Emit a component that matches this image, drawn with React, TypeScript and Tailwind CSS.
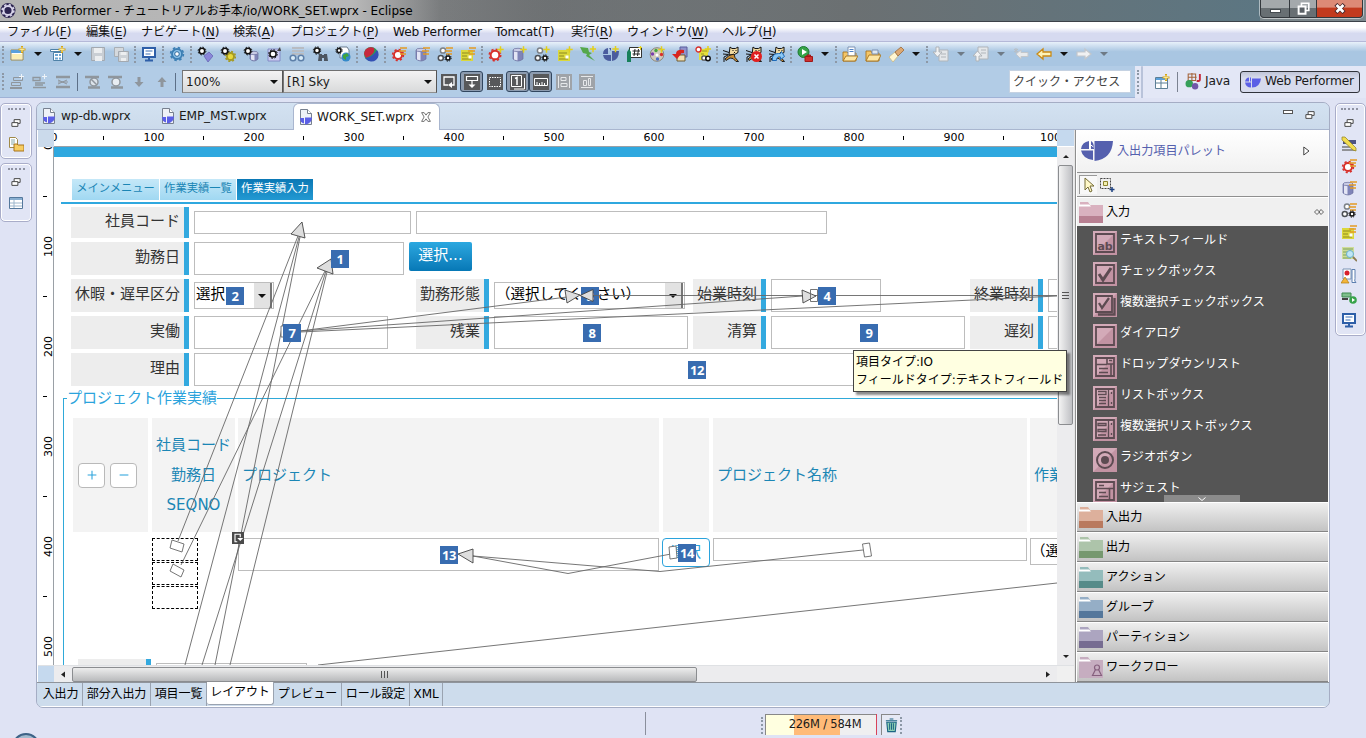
import type { ReactNode } from 'react';

/* ---------- icon primitives ---------- */

function Svg({ children, className = 'h-4 w-4' }: { children: ReactNode; className?: string }) {
  return (
    <svg viewBox="0 0 16 16" className={`shrink-0 ${className}`} fill="none">
      {children}
    </svg>
  );
}

function Gear({ x, y, r, c, fill = '#fff' }: { x: number; y: number; r: number; c: string; fill?: string }) {
  const small = r < 3.5;
  const outer = r + (small ? 0.9 : 1.4);
  const step = (Math.PI * 2 * outer) / 16;
  return (
    <g>
      <circle cx={x} cy={y} r={outer} stroke={c} strokeWidth={small ? 1 : 1.6} strokeDasharray={`${step} ${step}`} />
      <circle cx={x} cy={y} r={small ? r - 0.3 : r} stroke={c} strokeWidth={small ? 1.5 : 1.9} fill={fill} />
    </g>
  );
}

function Db({ x = 3, y = 2, w = 10, h = 13 }: { x?: number; y?: number; w?: number; h?: number }) {
  return (
    <g>
      <path d={`M${x} ${y + 2}v${h - 4}q${w / 2} 4 ${w} 0v-${h - 4}z`} fill="#7f84b8" stroke="#6a6f9c" strokeWidth=".7" />
      <path d={`M${x + 1} ${y + 2}v${h - 3.5}l3.5 1v-${h - 4}z`} fill="#e3e5f5" />
      <ellipse cx={x + w / 2} cy={y + 2} rx={w / 2} ry="1.7" fill="#c9cce6" stroke="#6a6f9c" strokeWidth=".7" />
    </g>
  );
}

const Plus = ({ x = 12.5, y = 3.5 }: { x?: number; y?: number }) => (
  <path d={`M${x} ${y - 3.2}v6.4M${x - 3.2} ${y}h6.4`} stroke="#e3cf1b" strokeWidth="1.5" />
);
const Bars = () => <path d="M9 2h7M8 5h7M9 8h6" stroke="#e39a24" strokeWidth="1.5" />;
const Note = () => (
  <g>
    <path d="M1 4h12v11H1z" fill="#dbd83c" />
    <path d="M2 7h8M2 10h5M2 13h9" stroke="#8f8a20" />
    <path d="M8.500 9.500h3v3h-3z" fill="#fff" />
  </g>
);
const Folder = () => (
  <g>
    <path d="M1 5h5l1 2h7v8H1z" fill="#f4c668" stroke="#a8741d" strokeWidth=".9" />
    <path d="M1 15l3-6h12l-3 6z" fill="#fde6a4" stroke="#a8741d" strokeWidth=".9" />
  </g>
);
const Cat = () => (
  <g>
    <path d="M7 1l2 1.500h3.500L15 1v5.500L11.500 8.500 6 9z" fill="#f0d9a0" stroke="#111" />
    <path d="M0 4.500l6 2M0 8l5.500 .5" stroke="#111" />
    <path d="M11 8l-5 1.500L2 13l1 1.500L7 12l3 .5L13 15.500h2.500L12 11.500z" fill="#c98f38" stroke="#111" strokeWidth=".9" />
    <path d="M5 9L1 11v5" stroke="#111" />
    <path d="M9.500 4.500h1M12.500 4.500h1M11 6.500h1" stroke="#111" />
  </g>
);

const ICONS: Record<string, ReactNode> = {
  newFile: (
    <>
      <path d="M1 4h12v10H1z" fill="#fff" stroke="#a08a49" />
      <path d="M1 4h12v3H1z" fill="#5aa0dc" />
      <path d="M2 8h10v5H2z" fill="#fbeeb3" />
      <path d="M12 0v7M8.5 3.5h7" stroke="#d4a416" strokeWidth="2" />
      <path d="M12 1v5M9.500 3.500h5" stroke="#fff3b0" strokeWidth=".8" />
    </>
  ),
  newType: (
    <>
      <path d="M.5 3.500h10v2H.5zM3.500 6.500h9v8h-9z" fill="#fff" stroke="#4f82a8" />
      <path d="M5 8h3v2H5zM5 11.500h3v2H5zM9 8h2v2H9zM9 11.500h2v2H9z" fill="#6da6d2" />
      <path d="M12 0v7M8.5 3.5h7" stroke="#d4a416" strokeWidth="2" />
      <path d="M12 1v5M9.500 3.500h5" stroke="#fff3b0" strokeWidth=".8" />
    </>
  ),
  save: (
    <>
      <path d="M1.500 1.500h13v13h-13z" fill="#c9ced4" stroke="#a3a9b0" />
      <path d="M4 2h8v5H4zM5 10h7v5H5z" fill="#eceef0" />
    </>
  ),
  saveAll: (
    <>
      <path d="M1.500 1.500h9v9h-9z" fill="#d5d9dd" stroke="#a9afb5" />
      <path d="M5.500 5.500h10v10h-10z" fill="#cdd2d7" stroke="#a3a9b0" />
      <path d="M7.500 6h6v3h-6zM8 12h5v3H8z" fill="#eceef0" />
    </>
  ),
  monitor: (
    <>
      <path d="M2 2h12v9H2z" fill="#fff" stroke="#2e5fa8" strokeWidth="2" />
      <path d="M4.500 5h7M4.500 8h5" stroke="#3b6fb5" />
      <path d="M4 14.500h8M8 11v3" stroke="#2e5fa8" strokeWidth="2" />
    </>
  ),
  gearBlue: (
    <>
      <Gear x={8} y={8} r={5} c="#3c7fb4" fill="#8dc3ea" />
      <circle cx="8" cy="8" r="2.300" fill="#fff" stroke="#2b6799" />
    </>
  ),
  gearTag: (
    <>
      <path d="M7 10l5-4 4 4-5 6z" fill="#8a86d8" stroke="#5550a8" strokeWidth=".6" />
      <Gear x={5} y={5} r={3} c="#111" />
    </>
  ),
  gearStar: (
    <>
      <Gear x={10.500} y={10.500} r={3.500} c="#a59a22" fill="#e8d93c" />
      <Gear x={5} y={5} r={3} c="#111" />
    </>
  ),
  gearDb: (
    <>
      <Db x={7} y={5} w={8} h={10} />
      <Gear x={5} y={5} r={3} c="#111" />
    </>
  ),
  gearDb2: (
    <>
      <path d="M2 3h12v12H2z" fill="#c9cbef" stroke="#7a7fc0" strokeWidth=".8" />
      <path d="M14 1l-3 4h4z" fill="#444" />
      <Gear x={7} y={8} r={3.400} c="#111" />
    </>
  ),
  glasses: (
    <>
      <path d="M3 2h12M3 5h12M3 8h12" stroke="#b8bcc2" strokeWidth="2" />
      <circle cx="4" cy="12" r="2.800" stroke="#5d7fa8" strokeWidth="1.500" fill="#d9ecf8" />
      <circle cx="12" cy="12" r="2.800" stroke="#5d7fa8" strokeWidth="1.500" fill="#d9ecf8" />
    </>
  ),
  binoc: (
    <>
      <path d="M7 8h3v7H6zM12 8h3l1 7h-4zM9 9h4v3H9z" fill="#4c5560" />
      <Gear x={5} y={4.500} r={2.800} c="#111" />
    </>
  ),
  gearGlobe: (
    <>
      <path d="M5 1h7l2 3v8H5z" fill="#fff" stroke="#6d7f91" />
      <circle cx="11" cy="11" r="4.500" fill="#3489c9" />
      <path d="M8 9l4-2 2 3-3 1v3l-3-2z" fill="#3fa53c" />
      <Gear x={4} y={4.500} r={2.300} c="#111" />
    </>
  ),
  globe: (
    <>
      <circle cx="8" cy="8" r="7" fill="#2b9b58" />
      <path d="M1 8a7 7 0 0 1 10-6Q13 8 3 12z" fill="#c7283d" />
      <path d="M2 12q8-1 12-8a7 7 0 0 1-11 9z" fill="#3450b4" />
    </>
  ),
  redBars: (
    <>
      <Gear x={7} y={9} r={4} c="#d8302b" />
      <Bars />
    </>
  ),
  dbBars: (
    <>
      <Db x={2} />
      <Bars />
    </>
  ),
  gearsBars: (
    <>
      <circle cx="6" cy="4.500" r="2.600" stroke="#7b8087" strokeWidth="1.500" fill="#fff" />
      <circle cx="3.800" cy="12" r="2.500" stroke="#4c5056" strokeWidth="1.500" fill="#fff" />
      <Bars />
      <Gear x={11} y={12} r={2.300} c="#111" />
    </>
  ),
  noteBars: (
    <>
      <Note />
      <Bars />
    </>
  ),
  redPlus: (
    <>
      <Gear x={7} y={9} r={4.300} c="#d8302b" />
      <Plus />
    </>
  ),
  dbPlus: (
    <>
      <Db x={2} />
      <Plus />
    </>
  ),
  gearsPlus: (
    <>
      <circle cx="6" cy="4.500" r="2.600" stroke="#7b8087" strokeWidth="1.500" fill="#fff" />
      <circle cx="3.800" cy="12" r="2.500" stroke="#4c5056" strokeWidth="1.500" fill="#fff" />
      <Plus />
      <Gear x={11} y={12} r={2.300} c="#111" />
    </>
  ),
  notePlus: (
    <>
      <Note />
      <Plus />
    </>
  ),
  bolt: (
    <>
      <path d="M0 1l8 1 1 4 3 1-3 2 6 6-9-5 1-2-4-1z" fill="#55a84c" />
      <Plus x={13} y={3} />
    </>
  ),
  wpPlus: (
    <>
      <path d="M0 9h8v6q-7 0-8-6zM0 8q0-5 5-6v6zM6 2l2 0v3zM9 5h7q0 9-7 10z" fill="#4a5c9e" />
      <Plus x={12.500} y={3} />
    </>
  ),
  hash: (
    <>
      <path d="M3.500 1.500h12v10h-12z" fill="#fff" stroke="#333" />
      <path d="M9 3l-1 7M12.500 3l-1 7M6.500 5h7.500M6.500 8h7.500" stroke="#111" strokeWidth=".9" />
      <path d="M1 6l2-3 2 3v10H1z" fill="#17805a" />
      <path d="M12.500 1.500h3.500M14.500 0v4" stroke="#e3cf1b" />
    </>
  ),
  palette: (
    <>
      <circle cx="8" cy="8.500" r="6.800" fill="#cfc9bd" stroke="#8b8579" />
      <circle cx="7" cy="4.500" r="1.700" fill="#46a83c" />
      <circle cx="3.500" cy="8" r="1.700" fill="#7a3fb0" />
      <circle cx="12.500" cy="8.500" r="1.700" fill="#d8302b" />
      <circle cx="8" cy="9" r="1.500" fill="#fff" />
      <circle cx="8.500" cy="13" r="1.700" fill="#4a6fc9" />
      <Plus x={12.500} y={3.500} />
    </>
  ),
  redDb: (
    <>
      <path d="M8 1h7v10H8z" fill="#8f93cc" stroke="#5a5f9c" />
      <path d="M5 9h8v6H5z" fill="#f3dfb0" stroke="#6e5a33" />
      <path d="M12 4Q4 3 4 8H0l5 5 4-5Q8 7 12 7z" fill="#d8251f" />
    </>
  ),
  gearNote: (
    <>
      <path d="M4 3h9v11H4z" fill="#e5df3c" />
      <path d="M7 5h5M6 8h3" stroke="#9a9420" />
      <circle cx="3.500" cy="3.500" r="2.500" stroke="#d8302b" strokeWidth="1.400" fill="#fff" />
      <circle cx="9" cy="12" r="2.200" stroke="#555" strokeWidth="1.300" fill="#fff" />
      <circle cx="13" cy="12.500" r="2.200" stroke="#111" strokeWidth="1.500" fill="#fff" />
      <Plus x={13} y={3} />
    </>
  ),
  cat: <Cat />,
  catX: (
    <>
      <Cat />
      <circle cx="10.500" cy="10.500" r="5.500" fill="#e02020" />
      <path d="M8.500 8.500l4 4M12.500 8.500l-4 4" stroke="#fff" strokeWidth="1.500" />
    </>
  ),
  catR: (
    <>
      <Cat />
      <path d="M3.500 14.500q-1-7 6-7h2l1-2 3 5-4 3v-2.500q-4-1-4 3.500z" fill="#8cc8f4" stroke="#1d6ab8" />
    </>
  ),
  run: (
    <>
      <circle cx="6.500" cy="6" r="5.500" fill="#36a348" stroke="#1d7a31" />
      <path d="M5 3l5 3-5 3z" fill="#fff" />
      <path d="M8 10.500h7.500v5H8zM10 10.500V9h3.500v1.500" fill="#cf2f2f" stroke="#a01818" />
    </>
  ),
  folderDoc: (
    <>
      <path d="M1 6h4l1 1h8v8H1z" fill="#f4c668" stroke="#a8741d" strokeWidth=".9" />
      <path d="M6 1h7v9H6z" fill="#fff" stroke="#7d93b4" />
      <path d="M7.500 3.500h4M7.500 5.500h4" stroke="#4f82c8" />
      <path d="M1 15l3-5h12l-3 5z" fill="#fde6a4" stroke="#a8741d" strokeWidth=".9" />
    </>
  ),
  folder: (
    <>
      <Folder />
      <path d="M7 4h6v4H7z" fill="#dfe8f2" stroke="#7d93b4" />
    </>
  ),
  torch: (
    <>
      <path d="M1 11l6-5 3 4-5 6z" fill="#fff6d2" stroke="#c9b47a" strokeWidth=".7" />
      <path d="M7 6l6-5 3 3-6 6z" fill="#dca872" stroke="#9b6a3a" strokeWidth=".8" />
    </>
  ),
  docDown: (
    <>
      <path d="M6 4h9v11H6z" fill="#e4e7ea" stroke="#b0b5ba" />
      <path d="M8 8h5M8 11h5" stroke="#b0b5ba" />
      <path d="M3 1h3v5h3L4.500 11 0 6h3z" fill="#f0f1f2" stroke="#aeb3b8" />
    </>
  ),
  docUp: (
    <>
      <path d="M5 1h10v12H5z" fill="#e4e7ea" stroke="#b0b5ba" />
      <path d="M8 4h5M8 7h5" stroke="#b0b5ba" />
      <path d="M3 15h3v-5h3L4.500 5 0 10h3z" fill="#f0f1f2" stroke="#aeb3b8" />
    </>
  ),
  backStar: (
    <>
      <path d="M3 8l5-4v2.500h7v4H8V13z" fill="#e8eaec" stroke="#c3c7cb" />
      <path d="M3 2v5M1 3l4 3M5 3L1 6" stroke="#b9bdc1" />
    </>
  ),
  back: <path d="M1 8l6-5v3h8v4H7v3z" fill="#fdf3b8" stroke="#c98a16" strokeWidth="1.300" />,
  forward: <path d="M15 8L9 3v3H1v4h8v3z" fill="#f0f1f2" stroke="#c3c7cb" strokeWidth="1.200" />,
  alignA: (
    <>
      <path d="M4.500 3.500h9v3h-9zM2.500 8.500h9v3h-9z" stroke="#8f969d" />
      <path d="M1 14h12" stroke="#8f969d" strokeWidth="2" />
      <path d="M12.500 0v5M10 2.500h5" stroke="#eef3f8" />
    </>
  ),
  alignB: (
    <>
      <path d="M1 3.500h7v3H1zM3 9h10" stroke="#8f969d" strokeWidth="1.300" />
      <path d="M1 13.500h13M3 11h8" stroke="#8f969d" strokeWidth="1.500" />
      <path d="M12.500 0v5M10 2.500h5" stroke="#eef3f8" />
    </>
  ),
  alignC: (
    <>
      <path d="M1 3h14M1 13h14" stroke="#8f969d" strokeWidth="2.500" />
      <path d="M3 6l9 4M3 10l9-4M3 8h10" stroke="#8f969d" />
    </>
  ),
  skipA: (
    <>
      <path d="M0 3h14M3 13.500h12" stroke="#8f969d" strokeWidth="2.500" />
      <circle cx="9" cy="8" r="4" fill="#dce3ea" stroke="#8f969d" strokeWidth="1.500" />
      <path d="M6 5l6 6" stroke="#8f969d" strokeWidth="1.500" />
    </>
  ),
  skipB: (
    <>
      <path d="M0 3h14M3 13.500h12" stroke="#8f969d" strokeWidth="2.500" />
      <circle cx="8" cy="8" r="4" fill="#e8edf2" stroke="#8f969d" strokeWidth="1.500" />
    </>
  ),
  down: <path d="M6.500 3h3v5h3L8 13 3.500 8h3z" fill="#8f969d" />,
  up: <path d="M6.500 13h3V8h3L8 3 3.500 8h3z" fill="#8f969d" />,
  wrap: (
    <>
      <path d="M0 0h16v16H0z" fill="#57585a" />
      <path d="M7 11H3V3h10v8h-2" stroke="#fff" strokeWidth="1.300" />
      <path d="M7 11l4-3v6z" fill="#fff" />
    </>
  ),
  dropBox: (
    <>
      <path d="M0 0h16v16H0z" fill="#57585a" />
      <path d="M2.500 2.500h11v4h-11zM8 6.500V12" stroke="#fff" strokeWidth="1.200" />
      <path d="M4.500 10.500h7L8 14z" fill="#fff" />
    </>
  ),
  dashed: (
    <>
      <path d="M0 0h16v16H0z" fill="#57585a" />
      <path d="M2.500 3.500h11v9h-11z" stroke="#fff" strokeDasharray="1.500 1" />
    </>
  ),
  one: (
    <>
      <path d="M0 0h16v16H0z" fill="#57585a" />
      <path d="M1.500 1.500h10v11h-10zM14.500 4v11H4" stroke="#fff" />
      <path d="M5 4.500l2-1V11" stroke="#fff" strokeWidth="1.500" />
    </>
  ),
  ruler: (
    <>
      <path d="M0 0h16v16H0z" fill="#57585a" />
      <path d="M1.500 4.500h13v7h-13zM4 8v3M6.500 9v2M9 8v3M11.500 9v2" stroke="#fff" />
    </>
  ),
  disA: (
    <>
      <path d="M0 0h16v16H0z" fill="#9fa3a8" />
      <path d="M2.500 2v12M13.500 2v12M5 3.500h5v3H5zM5 9.500h6v3H5z" stroke="#e6e8ea" />
    </>
  ),
  disB: (
    <>
      <path d="M0 0h16v16H0z" fill="#9fa3a8" />
      <path d="M2 2.500h12M2 13.500h12M4.500 6.500h3v5h-3zM9.500 4.500h2v7h-2z" stroke="#e6e8ea" />
    </>
  ),
  persp: (
    <>
      <path d="M1.500 3.500h12v11h-12zM2 9h11M7 6v8" fill="#fff" stroke="#5d7f95" />
      <path d="M2 4h11v2H2z" fill="#5aa0dc" />
      <path d="M12 0v7M8.500 3.500h7" stroke="#d4a416" strokeWidth="2" />
      <path d="M12 1v5M9.500 3.500h5" stroke="#fff3b0" strokeWidth=".8" />
    </>
  ),
  java: (
    <>
      <path d="M3 1h7v6H3zM6.500 0v7M3 4h8" stroke="#a4643a" />
      <circle cx="4" cy="10" r="3.500" fill="#36a05a" />
      <circle cx="9.500" cy="12.500" r="3" fill="#7257a8" />
      <path d="M14 1v5q0 2-3 1.500" stroke="#c32b3c" strokeWidth="1.800" />
    </>
  ),
  wp: (
    <>
      <path d="M0 8.500h6v5q-5 0-6-5zM0 7.500q1-4 4-4v4zM5 3.500h1v4H5z" fill="#5b5fe6" />
      <path d="M7 4.500h9q-1 9-9 9z" fill="#5b5fe6" />
    </>
  ),
  wprx: (
    <>
      <path d="M2.500 .5h7l4 4v11h-11z" fill="#eef1f7" stroke="#77808f" />
      <path d="M9.500 .5v4h4" fill="#fff" stroke="#77808f" />
      <path d="M2 9h4v5.500q-4-1-4-5.500zM7 8.500h7q0 6-7 7z" fill="#5b5fe6" />
    </>
  ),
  restore: (
    <>
      <path d="M5.500 3.500h8v5h-8z" fill="#fff" stroke="#444" strokeWidth="1.300" />
      <path d="M2.500 7.500h8v5h-8z" fill="#fff" stroke="#444" strokeWidth="1.300" />
    </>
  ),
  copyFolder: (
    <>
      <path d="M1.500 1.500h6l2 2v8h-8z" fill="#fff" stroke="#a08a49" />
      <path d="M3 4h4M3 6h4M3 8h3" stroke="#8aa" />
      <path d="M6 8h3l1 1h6v6H6z" fill="#f7cd62" stroke="#a8741d" />
    </>
  ),
  table: (
    <>
      <path d="M1.500 2.500h13v11h-13z" fill="#fff" stroke="#54789c" />
      <path d="M2 3h12v2H2z" fill="#88aed0" />
      <path d="M6 5v8M2 8h12M2 11h12" stroke="#9cb6cc" />
    </>
  ),
  pencil: (
    <>
      <path d="M2 4h13v4H2z" fill="#4c5383" />
      <path d="M1 14h14M1 11h8" stroke="#777" strokeWidth="1.500" />
      <path d="M1 1l3 0 11 11 0 3-3-1L1 4z" fill="#f1dc50" stroke="#8f7f20" strokeWidth=".7" />
    </>
  ),
  search: (
    <>
      <path d="M1 1h12v12H1z" fill="#cfdc9a" />
      <path d="M2 3h10M2 6h8M2 9h8M2 12h8" stroke="#7ba35c" />
      <circle cx="9" cy="8" r="3.500" fill="#bfe6f7" stroke="#6ab0cc" />
      <path d="M12 11l4 4" stroke="#8c7a52" strokeWidth="1.800" />
    </>
  ),
  problem: (
    <>
      <path d="M2 1h8v10H2z" fill="#fff" stroke="#7b93b4" />
      <circle cx="6" cy="5" r="2.500" fill="#d9202a" />
      <path d="M11 1.500h3v9q-1 3 1 4h-4z" fill="#fff" stroke="#5c7faf" />
      <path d="M4 9l4 6H0z" fill="#f4b63a" stroke="#b27b10" strokeWidth=".7" />
    </>
  ),
  server: (
    <>
      <path d="M1 3h9v4H1z" fill="#7fc08d" stroke="#3f8a51" />
      <path d="M1 9h6" stroke="#444" strokeWidth="2" />
      <circle cx="12" cy="10" r="3.800" fill="#37a34a" />
      <path d="M11 8l3 2-3 2z" fill="#fff" />
    </>
  ),
  trash: (
    <>
      <path d="M3 5h10l-1 10H4z" fill="#8fd0b4" stroke="#1b6584" strokeWidth="1.200" />
      <path d="M2 3.500h12M6 1.500h4M6 6v7M8 6v7M10 6v7" stroke="#1b6584" strokeWidth="1.100" />
    </>
  ),
};

const Icon = ({ n, className }: { n: string; className?: string }) => <Svg className={className}>{ICONS[n]}</Svg>;

const Caret = ({ dim = false }: { dim?: boolean }) => (
  <svg viewBox="0 0 8 4" className="h-1 w-2">
    <path d="M0 0h8L4 4z" fill={dim ? '#6e7a86' : '#111'} />
  </svg>
);

/* ---------- window chrome ---------- */

function TitleBar() {
  return (
    <div className="flex h-[22px] items-start border-b border-[#3c4148] bg-linear-to-r from-[#a9a9a9] via-[#6f7274] via-40% to-[#7d898e]">
      <div className="flex h-[21px] w-[440px] items-center gap-1.5 bg-linear-to-r from-[#b4b4b4] via-[#b8b8b8] via-80% to-transparent">
        <Svg className="h-[17px] w-4">
          <circle cx="8" cy="8" r="7.500" fill="#2c2450" />
          <Gear x={8} y={8} r={4.500} c="#d8d4ea" fill="#2c2450" />
        </Svg>
        <span className="text-[12px] tracking-[-0.02px] whitespace-nowrap text-black">Web Performer - チュートリアルお手本/io/WORK_SET.wprx - Eclipse</span>
      </div>
      <div className="h-[21px] flex-1 bg-linear-to-r from-transparent via-[#6b7072] via-50% to-[#5c7682]" />
      <div className="mr-[3px] flex h-[18px] w-[103px] overflow-hidden rounded-b-[4px] border border-t-0 border-[#33383d] bg-[#33383d] ring-1 ring-white/50">
        <div className="flex w-[28px] items-center justify-center bg-linear-to-b from-[#a4a9ac] from-45% to-[#686f73] to-50%">
          <span className="mt-1 h-[4px] w-[11px] border border-[#454b50] bg-white" />
        </div>
        <div className="ml-px flex w-[26px] items-center justify-center bg-linear-to-b from-[#a4a9ac] from-45% to-[#686f73] to-50%">
          <Svg className="h-[13px] w-[13px]">
            <path d="M5.500 1.500h9v9h-9z" stroke="#fff" strokeWidth="2" />
            <path d="M2 5.500h8.500v9H2z" fill="#5b6166" stroke="#fff" strokeWidth="2.400" />
          </Svg>
        </div>
        <div className="ml-px flex flex-1 items-center justify-center bg-linear-to-b from-[#dd8a76] from-40% to-[#c23a1e] to-50%">
          <Svg className="h-[11px] w-[12px]">
            <path d="M2 2l12 12M14 2L2 14" stroke="#47262a" strokeWidth="6" />
            <path d="M3 3l10 10M13 3L3 13" stroke="#fff" strokeWidth="4" />
          </Svg>
        </div>
      </div>
    </div>
  );
}

function MenuItem({ t, k, w }: { t: string; k: string; w: string }) {
  return (
    <span className={`shrink-0 whitespace-nowrap ${w}`}>
      {t}(<span className="underline underline-offset-2">{k}</span>)
    </span>
  );
}

function MenuBar() {
  return (
    <div className="flex h-5 items-center border-b border-[#b5b9d8] bg-linear-to-b from-white from-30% to-[#d6daf0] to-60% pl-[7px] text-[12.2px] leading-5 tracking-[-0.15px] text-[#111]">
      <MenuItem t="ファイル" k="F" w="w-[79px]" />
      <MenuItem t="編集" k="E" w="w-[55px]" />
      <MenuItem t="ナビゲート" k="N" w="w-[92px]" />
      <MenuItem t="検索" k="A" w="w-[57px]" />
      <MenuItem t="プロジェクト" k="P" w="w-[103px]" />
      <span className="w-[102px] shrink-0">Web Performer</span>
      <span className="w-[76px] shrink-0">Tomcat(T)</span>
      <MenuItem t="実行" k="R" w="w-[56px]" />
      <MenuItem t="ウィンドウ" k="W" w="w-[95px]" />
      <MenuItem t="ヘルプ" k="H" w="w-[70px]" />
    </div>
  );
}

const Dots = () => <span className="h-[17px] border-l-2 border-dotted border-[#8d98a6]" />;

const MAIN_TOOLS =
  'newFile v newType v save saveAll | monitor | gearBlue | gearTag gearStar gearDb gearDb2 glasses binoc gearGlobe | globe | redBars dbBars gearsBars noteBars | redPlus dbPlus gearsPlus notePlus bolt wpPlus hash palette redDb gearNote | cat catX catR | run v | folderDoc folder torch v | docDown d docUp d backStar back v forward d'.split(
    ' ',
  );

function MainTools() {
  return (
    <div className="flex h-6 items-center bg-linear-to-b from-[#e8f1fa] to-[#a9c6e2] to-40% pl-[2px]">
      <span className="flex w-[4px]">
        <Dots />
      </span>
      {MAIN_TOOLS.map((t, i) =>
        t === '|' ? (
          <span key={i} className="flex w-[5px] shrink-0 justify-center">
            <Dots />
          </span>
        ) : t === 'v' || t === 'd' ? (
          <span key={i} className="flex w-[17px] shrink-0 justify-center">
            <Caret dim={t === 'd'} />
          </span>
        ) : (
          <span key={i} className="flex w-[23px] shrink-0 justify-center">
            <Icon n={t} />
          </span>
        ),
      )}
    </div>
  );
}

function Combo({ text, w }: { text: string; w: string }) {
  return (
    <div className={`flex h-[23px] shrink-0 items-center justify-between border border-t-[#707070] border-r-[#555] border-b-[#8f8f8f] border-l-[#777] bg-linear-to-b from-[#f3f3f3] to-[#d9dadb] pr-1 pl-[3px] text-[12px] ${w}`}>
      {text}
      <Caret />
    </div>
  );
}

function LayoutTools() {
  const cell = 'flex h-5 w-[23px] shrink-0 items-center justify-center';
  const pressed = 'flex h-[21px] w-[23px] shrink-0 items-center justify-center rounded-[3px] border border-[#31465f] bg-[#8d9cb0]';
  return (
    <div className="flex h-8 items-center border-b border-[#9fb2d6] bg-[#b2cce6] pl-[2px]">
      <span className="flex w-[3px]">
        <Dots />
      </span>
      {['alignA', 'alignB', 'alignC'].map((n) => (
        <span key={n} className={cell}>
          <Icon n={n} />
        </span>
      ))}
      <span className="mx-[3px] h-[18px] w-px bg-[#5d7088]" />
      {['skipA', 'skipB', 'down', 'up'].map((n) => (
        <span key={n} className={cell}>
          <Icon n={n} />
        </span>
      ))}
      <span className="mr-[6px] ml-[2px] h-[18px] w-px bg-[#5d7088]" />
      <Combo text="100%" w="w-[101px]" />
      <Combo text="[R] Sky" w="w-[154px]" />
      <span className={cell}>
        <Icon n="wrap" />
      </span>
      <span className={pressed}>
        <Icon n="dropBox" />
      </span>
      <span className={cell}>
        <Icon n="dashed" />
      </span>
      <span className={pressed}>
        <Icon n="one" />
      </span>
      <span className={pressed}>
        <Icon n="ruler" />
      </span>
      <span className={cell}>
        <Icon n="disA" />
      </span>
      <span className={cell}>
        <Icon n="disB" />
      </span>
      <div className="flex-1" />
      <div className="flex h-[23px] w-[122px] items-center border border-[#c5d2e2] bg-white pl-[3px] text-[12px] text-[#444]">クイック・アクセス</div>
      <div className="ml-1 flex h-8 w-[231px] shrink-0 items-center bg-[#e3e7f6]">
        <span className="ml-[2px] h-6 border-l-2 border-dotted border-[#8d98a6]" />
        <span className="ml-[2px] h-8 w-[2px] rounded-t bg-[#b9c3da]" />
        <Icon n="persp" className="ml-[11px] h-4 w-4" />
        <span className="mr-[7px] ml-[7px] h-5 w-px bg-[#7b8291]" />
        <Icon n="java" className="h-[17px] w-[17px]" />
        <span className="ml-[3px] w-[31px] text-[12.2px] tracking-[-0.15px]">Java</span>
        <span className="ml-[4px] flex h-[22px] w-[120px] shrink-0 items-center gap-1 rounded-[3px] border border-[#30333a] bg-linear-to-b from-[#bfc4d6] to-[#d7dbec] to-30% pl-1 text-[12.2px] tracking-[-0.15px] whitespace-nowrap">
          <Icon n="wp" className="h-4 w-4" />
          Web Performer
        </span>
      </div>
    </div>
  );
}

function Grip() {
  return <span className="mx-auto block h-[3px] w-[17px] border-t-2 border-dotted border-[#8f93a2]" />;
}

function LeftTrim() {
  const box = 'flex w-8 flex-col items-center rounded-[5px] border border-[#a9adc9] bg-[#e1e5f5] pt-[4px] ring-1 ring-white ring-inset';
  return (
    <div className="flex w-9 flex-col gap-1 pt-[2px]">
      <div className={`h-[56px] ${box}`}>
        <Grip />
        <Icon n="restore" className="mt-[6px] h-3 w-3" />
        <Icon n="copyFolder" className="mt-[7px] h-4 w-4" />
      </div>
      <div className={`h-[59px] ${box}`}>
        <Grip />
        <Icon n="restore" className="mt-[5px] h-3 w-3" />
        <Icon n="table" className="mt-[7px] h-4 w-4" />
      </div>
    </div>
  );
}

function RightTrim() {
  return (
    <div className="mt-[2px] ml-[5px] flex h-[233px] w-[31px] flex-col items-center self-start rounded-[5px] border border-[#a9adc9] bg-[#e1e5f5] pt-[4px] pr-[3px] ring-1 ring-white ring-inset">
      <Grip />
      <Icon n="restore" className="mt-[6px] h-3 w-3" />
      <div className="mt-[7px] flex flex-col gap-[6px]">
        {['pencil', 'redBars', 'dbBars', 'gearsBars', 'noteBars', 'search', 'problem', 'server', 'monitor'].map((n) => (
          <Icon key={n} n={n} className="h-4 w-4" />
        ))}
      </div>
    </div>
  );
}

/* ---------- editor tabs and rulers ---------- */

function EditorTabs() {
  return (
    <div className="flex h-[27px] shrink-0 items-stretch border-b border-[#a9b6cf] bg-linear-to-b from-[#d3e2f1] to-[#cbdaeb] text-[12.2px] tracking-[-0.15px]">
      <div className="flex w-[118px] items-center gap-[4px] pl-[4px]">
        <Icon n="wprx" />
        wp-db.wprx
      </div>
      <div className="flex w-[138px] items-center gap-[3px] pl-[5px]">
        <Icon n="wprx" />
        EMP_MST.wprx
      </div>
      <div className="-mb-px flex w-[147px] items-center gap-[3px] rounded-t-[6px] border border-b-0 border-[#a9b6cf] bg-white pl-[4px]">
        <Icon n="wprx" />
        WORK_SET.wprx
        <Svg className="ml-[4px] h-[10px] w-[10px]">
          <path d="M1 1h4l3 4 3-4h4l-4 7 4 7h-4l-3-4-3 4H1l4-7z" stroke="#555" strokeWidth="1.300" />
        </Svg>
      </div>
      <div className="flex-1" />
      <div className="flex items-start pt-[6px] pr-[13px]">
        <span className="mt-[1px] h-[4px] w-[10px] border border-[#555] bg-white" />
        <Icon n="restore" className="ml-[11px] h-3 w-3" />
      </div>
    </div>
  );
}

function HRuler() {
  return (
    <div className="flex h-[17px]">
      <div className="h-[17px] w-[16px] shrink-0 bg-[#cbdaeb]" />
      <div className="flex h-[17px] w-[1003px] overflow-hidden border-b border-[#9aa0a6] bg-white text-[11px] text-black">
        <div className="-ml-[50px] flex">
          {[0, 100, 200, 300, 400, 500, 600, 700, 800, 900, 1000].map((n) => (
            <div key={n} className="flex h-[15px] w-[100px] shrink-0 items-center">
              <span className="flex-1 pl-px text-center leading-[15px]">{n}</span>
              <span className="h-1 w-px bg-black" />
            </div>
          ))}
        </div>
      </div>
      <div className="h-[16px] flex-1 bg-[#c5d9ee]" />
    </div>
  );
}

function VRuler() {
  return (
    <div className="h-[518px] w-[16px] shrink-0 overflow-hidden border-r border-[#9aa0a6] bg-white text-[11px] text-black">
      <div className="-mt-[50px] flex flex-col">
        {[0, 100, 200, 300, 400, 500].map((n) => (
          <div key={n} className="flex h-[100px] w-[15px] shrink-0 flex-col">
            <span className="ml-[6px] flex flex-1 rotate-180 items-center justify-center leading-[11px] [writing-mode:vertical-rl]">{n}</span>
            <span className="ml-[5px] h-px w-1 bg-black" />
          </div>
        ))}
      </div>
    </div>
  );
}

/* ---------- designed form ---------- */

function Label({ children, w }: { children: ReactNode; w: string }) {
  return (
    <div className={`flex h-full shrink-0 items-center justify-end border-r-[5px] border-[#33a9df] bg-[#ededed] pr-1 pb-[3px] text-[15px] whitespace-nowrap text-[#333] ${w}`}>
      {children}
    </div>
  );
}

const Field = ({ w, h = 'h-full' }: { w: string; h?: string }) => <div className={`shrink-0 border border-[#bdbdbd] bg-white ${w} ${h}`} />;

function Select({ text, w }: { text: string; w: string }) {
  return (
    <div className={`flex h-[27px] shrink-0 items-stretch overflow-hidden border border-[#bdbdbd] bg-white text-[14.5px] whitespace-nowrap text-black ${w}`}>
      <span className="flex flex-1 items-center pb-[2px] pl-px">{text}</span>
      <span className="mr-[1px] flex w-[18px] shrink-0 items-center justify-center border-r-2 border-[#777] bg-[#e2e2e2]">
        <Caret />
      </span>
    </div>
  );
}

function Badge({ n, at }: { n: number; at: string }) {
  return (
    <span className={`absolute flex h-[18px] w-[18px] items-center justify-center bg-[#386cb0] font-['Noto_Sans',sans-serif] text-[13px] leading-none font-bold tracking-[-0.4px] text-white ${at}`}>
      {n}
    </span>
  );
}

function FormRows() {
  return (
    <div className="flex flex-col gap-1 pt-[3px] pl-[17px]">
      <div className="flex h-[31px] items-center">
        <Label w="w-[118px]">社員コード</Label>
        <div className="ml-[5px] flex gap-[5px]">
          <Field w="w-[217px]" h="h-[23px]" />
          <Field w="w-[411px]" h="h-[23px]" />
        </div>
      </div>
      <div className="flex h-[33px] items-start">
        <Label w="w-[118px]">勤務日</Label>
        <div className="ml-[5px] flex h-full gap-[5px]">
          <Field w="w-[210px]" />
          <div className="flex h-[29px] w-[63px] items-center justify-center rounded-[2px] bg-linear-to-b from-[#2ba8e0] to-[#0678b6] pb-[2px] text-[15px] text-white">選択...</div>
        </div>
      </div>
      <div className="flex h-[33px] items-center">
        <Label w="w-[118px]">休暇・遅早区分</Label>
        <div className="ml-[5px] w-[222px] shrink-0">
          <Select text="選択" w="w-[80px]" />
        </div>
        <Label w="w-[73px]">勤務形態</Label>
        <div className="ml-[5px] w-[199px] shrink-0">
          <Select text="（選択してください）" w="w-[191px]" />
        </div>
        <Label w="w-[73px]">始業時刻</Label>
        <div className="ml-[5px] h-full w-[199px] shrink-0">
          <Field w="w-[110px]" />
        </div>
        <Label w="w-[73px]">終業時刻</Label>
        <div className="ml-[5px] h-full">
          <Field w="w-[110px]" />
        </div>
      </div>
      <div className="flex h-[33px] items-center">
        <Label w="w-[118px]">実働</Label>
        <div className="ml-[5px] h-full w-[222px] shrink-0">
          <Field w="w-[194px]" />
        </div>
        <Label w="w-[73px]">残業</Label>
        <div className="ml-[5px] h-full w-[199px] shrink-0">
          <Field w="w-[194px]" />
        </div>
        <Label w="w-[73px]">清算</Label>
        <div className="ml-[5px] h-full w-[199px] shrink-0">
          <Field w="w-[194px]" />
        </div>
        <Label w="w-[73px]">遅刻</Label>
        <div className="ml-[5px] h-full">
          <Field w="w-[194px]" />
        </div>
      </div>
      <div className="flex h-[33px] items-center">
        <Label w="w-[118px]">理由</Label>
        <div className="ml-[5px] h-full">
          <Field w="w-[900px]" />
        </div>
      </div>
    </div>
  );
}

function ProjectGroup() {
  const th = 'flex h-[114px] shrink-0 items-center bg-[#f3f3f3] text-[15px] whitespace-nowrap text-[#1b86b5]';
  const sq = 'flex h-[25px] w-[27px] items-center justify-center rounded-[4px] border border-[#b9b9b9] bg-white';
  const hidden = 'h-[23px] w-[46px] border border-dashed border-black';
  return (
    <div className="ml-[9px] h-[300px] w-[1100px]">
      <div className="flex h-[24px] items-center">
        <span className="mt-[12px] h-[12px] w-[4px] border-t border-l border-[#2fa9d9]" />
        <span className="text-[15px] leading-6 whitespace-nowrap text-[#2ba3dc]">プロジェクト作業実績</span>
        <span className="h-px flex-1 bg-[#2fa9d9]" />
      </div>
      <div className="h-[276px] border-l border-[#2fa9d9] pt-[8px] pl-[9px]">
        <div className="flex">
          <div className={`w-[75px] gap-[5px] pl-[5px] ${th}`}>
            <span className={sq}>
              <Svg className="h-[14px] w-[14px]">
                <path d="M8 3v10M3 8h10" stroke="#2ba3dc" strokeWidth="1.200" />
              </Svg>
            </span>
            <span className={sq}>
              <Svg className="h-[14px] w-[14px]">
                <path d="M3 8h10" stroke="#2ba3dc" strokeWidth="1.200" />
              </Svg>
            </span>
          </div>
          <div className={`ml-1 w-[83px] flex-col justify-center leading-[30px] ${th}`}>
            <span>社員コード</span>
            <span>勤務日</span>
            <span>SEQNO</span>
          </div>
          <div className={`ml-[3px] w-[421px] pl-1 ${th}`}>プロジェクト</div>
          <div className={`ml-1 w-[46px] ${th}`} />
          <div className={`ml-1 w-[314px] pl-1 ${th}`}>プロジェクト名称</div>
          <div className={`ml-[3px] w-[100px] pl-[4px] ${th}`}>作業</div>
        </div>
        <div className="flex pt-[6px] pl-[79px]">
          <div className="flex flex-col gap-px">
            <span className={hidden} />
            <span className={hidden} />
            <span className={hidden} />
          </div>
          <div className="ml-[40px] flex items-start">
            <Field w="w-[421px]" h="h-[33px]" />
            <div className="ml-[3px] flex h-[29px] w-[48px] items-center justify-center rounded-[4px] border border-[#2ba3dc] bg-white text-[15px] text-[#2ba3dc]">選択</div>
            <div className="ml-[3px]">
              <Field w="w-[314px]" h="h-[23px]" />
            </div>
            <div className="ml-[3px] flex h-[27px] w-[120px] items-center border border-[#bdbdbd] bg-white text-[14.5px] whitespace-nowrap text-black">（選択してください）</div>
          </div>
        </div>
      </div>
    </div>
  );
}

const LINES = [
  '298,236 178,541',
  '299,237 185,665',
  '300,237 215,665',
  '325,271 181,565',
  '326,271 202,665',
  '327,272 230,665',
  '300,331 567,297',
  '300,331 803,296',
  '300,332 1057,296',
  '593,295.5 1057,295.5',
  '473,556 568,573.5 671,554',
  '473,556 660,571.500 863,550',
  '318,665 1057,583',
];

function Links() {
  return (
    <svg viewBox="54 147 1003 518" className="absolute inset-0 h-[518px] w-[1003px]" fill="none" stroke="#666" strokeWidth=".9">
      {LINES.map((p) => (
        <polyline key={p} points={p} />
      ))}
      <g fill="#dedede" stroke="#444">
        <path d="M302 222l3 16-14-4zM331 259l2 15-16-6zM565 290l15 5-13 8zM580 295.500l13-6v12zM802 290l14 6-13 7zM458 554l15-5v14z" />
      </g>
      <g fill="#fff">
        <path d="M172 540l12 4-2 8-12-4zM173 564l11 6-3 7-11-6z" />
        <path d="M669 547l7-1 1 12-7 1zM862.500 544l7-1 2 13-7 1z" />
        <path d="M281 326h6v11h-6z" />
      </g>
      <path d="M810.500 289.500h7v12h-7z" />
    </svg>
  );
}

function Canvas() {
  const tab = 'flex h-[21px] items-center justify-center pb-px text-[11.3px] whitespace-nowrap';
  return (
    <div className="relative h-[518px] w-[1003px] shrink-0 overflow-hidden bg-white">
      <div className="h-[10px] bg-[#2fa8df]" />
      <div className="mt-[22px] flex gap-px pl-[18px]">
        <div className={`w-[87px] bg-linear-to-b from-[#c5e8f8] to-[#a0d8f2] text-[#1b86b5] ${tab}`}>メインメニュー</div>
        <div className={`w-[76px] bg-linear-to-b from-[#c5e8f8] to-[#a0d8f2] text-[#1b86b5] ${tab}`}>作業実績一覧</div>
        <div className={`w-[76px] bg-linear-to-b from-[#0a78b5] to-[#2299d2] text-white ${tab}`}>作業実績入力</div>
      </div>
      <div className="mt-[2px] ml-[7px] h-[2px] bg-[#2fa8df]" />
      <FormRows />
      <ProjectGroup />
      <div className="-mt-[27px] ml-[24px] flex items-start">
        <span className="h-[20px] w-[73px] border-r-[5px] border-[#33a9df] bg-[#ededed]" />
        <span className="mt-[4px] ml-[5px]">
          <Field w="w-[151px]" h="h-[20px]" />
        </span>
      </div>
      <Badge n={3} at="top-[140px] left-[527px]" />
      <Badge n={14} at="top-[397px] left-[624px]" />
      <Links />
      <Badge n={1} at="top-[103px] left-[277px]" />
      <Badge n={2} at="top-[140px] left-[172px]" />
      <Badge n={4} at="top-[140px] left-[764px]" />
      <Badge n={7} at="top-[177px] left-[229px]" />
      <Badge n={8} at="top-[177px] left-[529px]" />
      <Badge n={9} at="top-[177px] left-[806px]" />
      <Badge n={12} at="top-[214px] left-[634px]" />
      <Badge n={13} at="top-[399px] left-[386px]" />
      <span className="absolute top-[385px] left-[178px] flex h-3 w-3 bg-[#4a4a4a]">
        <Svg className="h-3 w-3">
          <path d="M8 3H4v10h3M8 3h3v4" stroke="#fff" strokeWidth="1.500" />
          <path d="M7 8h8l-4 4z" fill="#fff" />
        </Svg>
      </span>
    </div>
  );
}

function VScroll() {
  return (
    <div className="flex h-[518px] w-[17px] flex-col items-center bg-[#ececee]">
      <div className="flex h-[18px] items-center">
        <svg viewBox="0 0 6 3" className="h-[3px] w-[6px]">
          <path d="M0 3h6L3 0z" fill="#222" />
        </svg>
      </div>
      <div className="flex h-[260px] w-[15px] flex-col items-center justify-center gap-[2px] rounded-[2px] border border-[#8b8d90] bg-linear-to-r from-[#f3f3f3] to-[#bfc0c4]">
        <span className="h-px w-[7px] bg-[#555]" />
        <span className="h-px w-[7px] bg-[#555]" />
        <span className="h-px w-[7px] bg-[#555]" />
      </div>
      <div className="flex-1" />
      <div className="flex h-[17px] items-center">
        <svg viewBox="0 0 6 3" className="h-[3px] w-[6px]">
          <path d="M0 0h6L3 3z" fill="#222" />
        </svg>
      </div>
    </div>
  );
}

function HScroll() {
  return (
    <div className="flex h-[17px] border-t border-[#dfe1e4]">
      <div className="w-[16px] bg-[#c5d9ee]" />
      <div className="flex w-[1003px] items-center bg-[#ececee]">
        <div className="flex w-[18px] justify-center">
          <svg viewBox="0 0 4 6" className="h-[7px] w-1">
            <path d="M4 0v6L0 3z" fill="#222" />
          </svg>
        </div>
        <div className="flex h-[15px] w-[625px] items-center justify-center gap-[2px] rounded-[2px] border border-[#8b8d90] bg-linear-to-b from-[#ededed] to-[#b9babc]">
          <span className="h-[7px] w-px bg-[#555]" />
          <span className="h-[7px] w-px bg-[#555]" />
          <span className="h-[7px] w-px bg-[#555]" />
        </div>
        <div className="flex-1" />
        <svg viewBox="0 0 4 6" className="mr-[7px] h-[7px] w-1">
          <path d="M0 0v6l4-3z" fill="#222" />
        </svg>
      </div>
      <div className="flex-1 bg-[#f0f0f0]" />
    </div>
  );
}

function PageTabs() {
  const tab = 'flex h-[23px] shrink-0 items-center justify-center border-r border-[#9aa3b0] whitespace-nowrap pb-[2px]';
  return (
    <div className="flex h-[24px] border-t border-[#8f949b] bg-[#cddcec] pl-[2px] text-[12px] tracking-[-0.1px] text-black">
      <div className={`w-[44px] ${tab}`}>入出力</div>
      <div className={`w-[68px] ${tab}`}>部分入出力</div>
      <div className={`w-[56px] ${tab}`}>項目一覧</div>
      <div className={`-mt-px w-[67px] rounded-b-[3px] border-b bg-white ${tab}`}>レイアウト</div>
      <div className={`w-[68px] ${tab}`}>プレビュー</div>
      <div className={`w-[68px] ${tab}`}>ロール設定</div>
      <div className={`w-[33px] ${tab}`}>XML</div>
    </div>
  );
}

/* ---------- palette ---------- */

function FolderIcon({ a, b, person = false }: { a: string; b: string; person?: boolean }) {
  return (
    <svg viewBox="0 0 24 21" className="h-[21px] w-6 shrink-0">
      <path d="M1 0h8l2 3H1z" fill={a} />
      <path d="M0 4h10l2-1h12v18H0z" fill={a} />
      <path d="M0 2.500h10l2 2H0z" fill="#fff" />
      <path d="M0 14h24v7H0z" fill={person ? a : b} />
      {person && (
        <>
          <circle cx="18" cy="10.500" r="2.500" stroke={b} strokeWidth="1.200" fill="none" />
          <path d="M16.500 12.500L13.500 18.500h9l-3-6" stroke={b} strokeWidth="1.200" fill="none" />
        </>
      )}
    </svg>
  );
}

const ITEMS: [string, ReactNode][] = [
  [
    'テキストフィールド',
    <text x="4.500" y="18.500" fontSize="11" fontWeight="bold" fill="#5d4b52" fontFamily="DejaVu Sans" textLength="15">
      ab
    </text>,
  ],
  ['チェックボックス', <path d="M6 12l4 6 8-12" strokeWidth="3" />],
  ['複数選択チェックボックス', <path d="M6 10l3 5 7-10M21.500 5v16.500H5" strokeWidth="2.300" />],
  ['ダイアログ', null],
  ['ドロップダウンリスト', <path d="M14 3v6h7M16 5.500h3M3 9.500h11M6 13.500h9M6 17.500h9M18 9v12" />],
  ['リストボックス', <path d="M15.500 3v18M5 5.500h8v3H5M6 11.500h7M6 14.500h7M6 17.500h7M18.500 6v2M18.500 16v2" strokeWidth="1.300" />],
  ['複数選択リストボックス', <path d="M15.500 3v18M5 6.500h8v2H5zM5 12.500h8v2H5zM5 18h8M18.500 6v2M18.500 16v2" strokeWidth="1.300" />],
  ['ラジオボタン', null],
  ['サジェスト', <path d="M3 9.500h18M6 6.500h5M16.500 10v12M6 13.500h7M6 17.500h9" />],
];

function PaletteIcon({ i }: { i: number }) {
  const mark = ITEMS[i][1];
  return (
    <svg viewBox="0 0 24 24" className="h-6 w-6 shrink-0" fill="none" stroke="#5d4b52" strokeWidth="1.600">
      <path d="M0 0h24v24H0z" fill="#c293a3" stroke="none" />
      <path d="M0 0h24L0 24z" fill="#d3aab8" stroke="none" />
      {i === 7 ? (
        <>
          <circle cx="12" cy="12" r="8" strokeWidth="2" />
          <circle cx="12" cy="12" r="4" fill="#5d4b52" stroke="none" />
        </>
      ) : i === 2 ? (
        <path d="M3 3h16v16H3z" strokeWidth="1.800" />
      ) : (
        <path d="M3 3h18v18H3z" strokeWidth="1.800" />
      )}
      <g stroke={i === 0 ? 'none' : '#5d4b52'}>{mark}</g>
    </svg>
  );
}

const DRAWERS = [
  ['入出力', '#ddb09c', '#b97a5f'],
  ['出力', '#adc4aa', '#76986f'],
  ['アクション', '#94bcbc', '#568b89'],
  ['グループ', '#95aec6', '#55779b'],
  ['パーティション', '#aca5c0', '#766c91'],
  ['ワークフロー', '#c6adc0', '#86607e'],
];

function Palette() {
  return (
    <div className="flex h-[552px] w-[251px] flex-col text-[12.1px] text-black">
      <div className="flex h-[42px] items-center bg-linear-to-b from-white to-[#f1f1f1] pl-[4px]">
        <svg viewBox="0 0 32 20" className="h-5 w-8" fill="#5560ae">
          <path d="M0 8Q1 1 8 0v8zM10 0q3 1 3 8h-3zM0 9.500h12V19Q2 18 0 9.500zM13.500 0H32Q31 18 13.500 20z" />
          <path d="M8.500 0v8M8.500 3l4 3" stroke="#fff" strokeWidth="1" />
        </svg>
        <span className="ml-[4px] flex-1 text-[#5560ae]">入出力項目パレット</span>
        <svg viewBox="0 0 7 10" className="mr-[18px] h-[10px] w-[7px]" fill="#fff" stroke="#444">
          <path d="M.8 1v8L6 5z" />
        </svg>
      </div>
      <div className="flex h-[25px] items-center border-y border-[#8f8f8f] bg-[#f0f0f0] pl-[2px]">
        <span className="flex h-[19px] w-[18px] items-center justify-center border-t border-l border-[#999] bg-[#f8f8f8]">
          <Svg className="h-4 w-4">
            <path d="M4 1v12l3-3 2 5 2-1-2-5h4z" fill="#fff8c8" stroke="#766c35" />
          </Svg>
        </span>
        <Svg className="ml-[2px] h-4 w-4">
          <path d="M1.500 1.500h10v10h-10z" stroke="#444" strokeDasharray="2 1" />
          <path d="M4.500 4.500h4v4h-4z" fill="#f3efb0" stroke="#8d8530" />
          <path d="M13 10v5M10.500 12.500h5" stroke="#1d4080" strokeWidth="1.500" />
        </Svg>
      </div>
      <div className="mt-px flex h-[28px] items-center bg-[#f0f0f0] pl-[2px]">
        <FolderIcon a="#d9b1bf" b="#b88092" />
        <span className="ml-[3px] flex-1">入力</span>
        <svg viewBox="0 0 10 6" className="mr-[4px] h-[6px] w-[10px]" fill="none" stroke="#555" strokeWidth=".9">
          <path d="M3 .5L.5 3 3 5.500 5.500 3zM5 3L7 .5 9.500 3 7 5.500z" />
        </svg>
      </div>
      <div className="relative h-[276px] overflow-hidden bg-[#555] pt-[5px] text-white">
        {ITEMS.map(([name], i) => (
          <div key={name} className="flex h-[31px] items-start gap-[3px] pl-[16px]">
            <PaletteIcon i={i} />
            <span className="leading-[19px] whitespace-nowrap">{name}</span>
          </div>
        ))}
        <div className="absolute bottom-0 left-[87px] flex h-[7px] w-[76px] items-center justify-center bg-[#8b8b8b]">
          <svg viewBox="0 0 8 4" className="h-1 w-2" fill="none" stroke="#fff">
            <path d="M.5 .5L4 3.500 7.500 .5" />
          </svg>
        </div>
      </div>
      {DRAWERS.map(([name, a, b], i) => (
        <div key={name} className="flex h-[30px] items-center gap-[3px] border-t border-b border-t-white border-b-[#858585] bg-linear-to-b from-[#efefef] to-[#c3c3c3] pt-px pl-[2px]">
          <FolderIcon a={a} b={b} person={i === 5} />
          {name}
        </div>
      ))}
    </div>
  );
}

function Tooltip() {
  return (
    <div className="absolute top-[350px] left-[853px] h-[42px] w-[214px] border border-[#444] bg-[#ffffe1] pt-[2px] pl-[2px] text-[12px] leading-[18px] whitespace-nowrap text-black shadow-[3px_3px_2px_rgba(0,0,0,0.45)]">
      <div>項目タイプ:IO</div>
      <div>フィールドタイプ:テキストフィールド</div>
    </div>
  );
}

function StatusBar() {
  return (
    <div className="flex h-[30px] items-start overflow-hidden pl-[12px]">
      <div className="mt-[25px] h-[28px] w-[28px] rounded-full border-2 border-[#3d6286] bg-linear-to-b from-[#9db7cc] to-[#d5e4ee]" />
      <span className="mt-[4px] ml-[605px] h-[23px] w-px bg-[#8a8f9c]" />
      <span className="mt-[9px] ml-[115px] h-[17px] border-l-2 border-dotted border-[#8d98a6]" />
      <div className="mt-[6px] ml-[2px] flex h-[21px] w-[112px] items-center justify-center border-t border-l border-[#888] bg-[linear-gradient(to_right,#ffffe0_28px,#ffbb78_28px,#ffbb78_74px,#efeff0_74px)] pl-[7px] text-[11.5px] tracking-[-0.2px] whitespace-nowrap">
        226M / 584M
      </div>
      <span className="mt-[6px] -ml-px h-[21px] w-px bg-[#d8425a]" />
      <span className="mt-[6px] ml-[4px] flex h-[21px] w-[19px] items-center justify-center border-t border-l border-[#888] bg-[#e6e9f4]">
        <Icon n="trash" className="h-[18px] w-[15px]" />
      </span>
      <span className="mt-[9px] h-[17px] border-l-2 border-dotted border-[#8d98a6]" />
    </div>
  );
}

export default function App() {
  return (
    <div className="relative flex h-[738px] w-[1366px] flex-col overflow-hidden bg-[#dfe3f4] font-['DejaVu_Sans','Noto_Sans_CJK_JP',sans-serif] text-[#1a1a1a]">
      <TitleBar />
      <MenuBar />
      <MainTools />
      <LayoutTools />
      <div className="flex h-[610px] pt-[3px]">
        <LeftTrim />
        <div className="mt-px flex h-[606px] w-[1294px] shrink-0 flex-col overflow-hidden rounded-[7px] border border-[#a5adc4] bg-[#cddcec]">
          <EditorTabs />
          <div className="flex h-[552px] shrink-0 bg-white pl-px">
            <div className="w-[1036px]">
              <HRuler />
              <div className="flex">
                <VRuler />
                <Canvas />
                <VScroll />
              </div>
              <HScroll />
            </div>
            <div className="mr-[1px] w-[2px] border-r border-[#8f8f8f] bg-[#e5e5e5]" />
            <Palette />
          </div>
          <PageTabs />
          <div className="h-[2px] bg-white" />
        </div>
        <RightTrim />
      </div>
      <StatusBar />
      <Tooltip />
    </div>
  );
}
